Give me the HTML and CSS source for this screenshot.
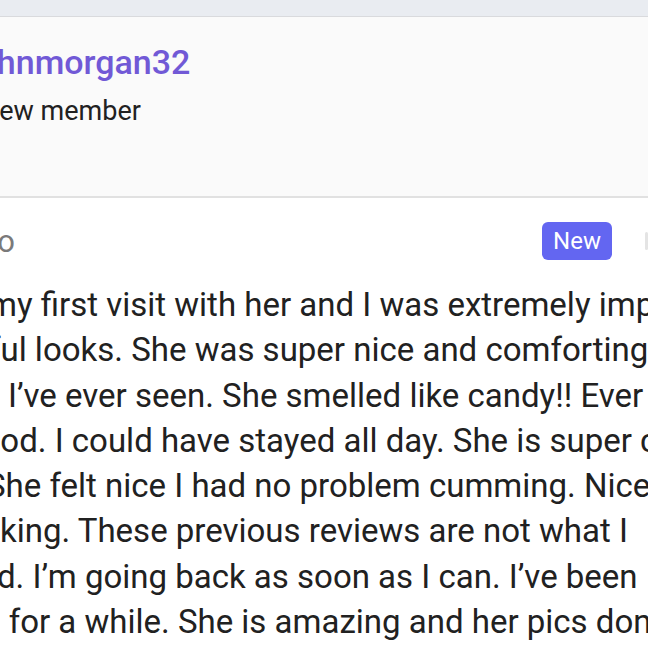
FILE: index.html
```html
<!DOCTYPE html>
<html>
<head>
<meta charset="utf-8">
<link rel="stylesheet" href="styles.css">
</head>
<body>
<div class="page">
  <div class="topbar"></div>
  <section class="profile">
    <div class="username">johnmorgan32</div>
    <div class="rank">New member</div>
  </section>
  <section class="post">
    <div class="meta">
      <span class="time">2 days ago</span>
      <span class="spacer"></span>
      <span class="badge">New</span>
      <span class="more"></span>
    </div>
    <div class="body">
      <div class="line l1">my first visit with her and I was extremely impressed</div>
      <div class="line l2">ful looks. She was super nice and comforting</div>
      <div class="line l3">I’ve ever seen. She smelled like candy!! Ever</div>
      <div class="line l4">good. I could have stayed all day. She is super c</div>
      <div class="line l5">She felt nice I had no problem cumming. Nice</div>
      <div class="line l6">king. These previous reviews are not what I</div>
      <div class="line l7">d. I’m going back as soon as I can. I’ve been</div>
      <div class="line l8">, for a while. She is amazing and her pics don’t</div>
    </div>
  </section>
</div>
</body>
</html>
```
FILE: styles.css
```css
html, body {
  margin: 0;
  padding: 0;
  background: #ffffff;
}
body {
  width: 648px;
  height: 647px;
  overflow: hidden;
  font-family: Roboto, "Noto Sans", sans-serif;
  color: #212121;
}
.page {
  width: 648px;
  overflow: hidden;
}
.topbar {
  height: 16px;
  background: #e9ecf1;
  border-bottom: 1px solid #d9dadd;
}
.profile {
  background: #fafafa;
  height: 181px;
  box-sizing: border-box;
  padding-top: 26px;
  border-bottom: 2px solid #e1e1e1;
  overflow: hidden;
}
.username {
  font-size: 34px;
  line-height: 38px;
  font-weight: 500;
  color: #7159d6;
  white-space: nowrap;
  margin-left: -31px;
}
.rank {
  font-size: 27px;
  line-height: 34px;
  margin-top: 13px;
  white-space: nowrap;
  margin-left: -20px;
}
.post {
  background: #fff;
}
.meta {
  display: flex;
  align-items: center;
  height: 38px;
  padding-top: 24px;
  white-space: nowrap;
}
.time {
  font-size: 31px;
  color: #7a7a7a;
  width: 200px;
  margin-left: -185px;
  text-align: right;
  flex: none;
}
.spacer {
  flex: 1;
}
.badge {
  background: #6366f1;
  color: #fff;
  font-size: 24px;
  height: 38px;
  line-height: 38px;
  padding: 0 11px;
  border-radius: 6px;
  box-sizing: border-box;
  margin-right: 33px;
  flex: none;
}
.more {
  width: 3px;
  height: 18px;
  background: #e4e4e4;
  border-radius: 2px;
  flex: none;
}
.body {
  padding-top: 22px;
  font-size: 33px;
  line-height: 45.3px;
}
.line {
  white-space: nowrap;
}
.l1 { text-indent: -12px; }
.l2 { text-indent: -11px; }
.l3 { text-indent: 8px; }
.l4 { text-indent: -37px; }
.l5 { text-indent: -14px; }
.l6 { text-indent: 0px; }
.l7 { text-indent: -3px; }
.l8 { text-indent: -6px; }
```
